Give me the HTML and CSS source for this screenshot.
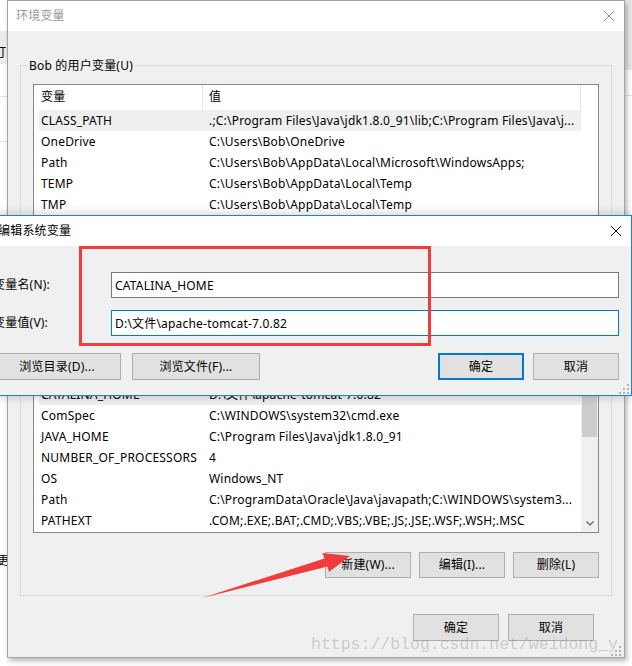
FILE: index.html
```html
<!DOCTYPE html>
<html lang="zh-CN">
<head>
<meta charset="utf-8">
<title>环境变量</title>
<link rel="stylesheet" href="styles.css">
</head>
<body>
<div class="desk">
  <div class="bgwin">
    <div class="strip strip-l">
      <div class="sl-top"></div>
      <div class="sl-band"><span class="sl-text">打</span></div>
      <div class="sl-line l1"></div>
      <div class="sl-line l2"></div>
      <div class="sl-text2">更新</div>
    </div>
    <div class="strip strip-r">
      <div class="sr-band"></div>
      <div class="sr-line"></div>
    </div>
  </div>

  <div class="win">
    <div class="win-title">
      <span class="win-title-text">环境变量</span>
      <svg class="x-icon" width="12" height="12" viewBox="0 0 12 12"><path d="M1 1 L11 11 M11 1 L1 11" stroke="#8e8e8e" stroke-width="1" fill="none"/></svg>
    </div>
    <div class="win-body">
      <fieldset class="group">
        <legend>Bob 的用户变量(U)</legend>
        <div class="list user-list">
          <div class="list-main">
            <div class="lv-head"><div class="hc1">变量</div><div class="hc2">值</div></div>
            <div class="lv-row sel"><div class="c1">CLASS_PATH</div><div class="c2">.;C:\Program Files\Java\jdk1.8.0_91\lib;C:\Program Files\Java\j...</div></div>
            <div class="lv-row"><div class="c1">OneDrive</div><div class="c2">C:\Users\Bob\OneDrive</div></div>
            <div class="lv-row"><div class="c1">Path</div><div class="c2">C:\Users\Bob\AppData\Local\Microsoft\WindowsApps;</div></div>
            <div class="lv-row"><div class="c1">TEMP</div><div class="c2">C:\Users\Bob\AppData\Local\Temp</div></div>
            <div class="lv-row"><div class="c1">TMP</div><div class="c2">C:\Users\Bob\AppData\Local\Temp</div></div>
          </div>
        </div>
        <div class="btns">
          <button class="btn">新建(N)...</button>
          <button class="btn">编辑(E)...</button>
          <button class="btn">删除(D)</button>
        </div>
      </fieldset>
      <fieldset class="group sys">
        <legend>系统变量(S)</legend>
        <div class="list sys-list">
          <div class="list-main">
            <div class="lv-head"><div class="hc1">变量</div><div class="hc2">值</div></div>
            <div class="lv-row"><div class="c1">ASL.log</div><div class="c2">Destination=file</div></div>
            <div class="lv-row sel"><div class="c1">CATALINA_HOME</div><div class="c2">D:\文件\apache-tomcat-7.0.82</div></div>
            <div class="lv-row"><div class="c1">ComSpec</div><div class="c2">C:\WINDOWS\system32\cmd.exe</div></div>
            <div class="lv-row"><div class="c1">JAVA_HOME</div><div class="c2">C:\Program Files\Java\jdk1.8.0_91</div></div>
            <div class="lv-row"><div class="c1">NUMBER_OF_PROCESSORS</div><div class="c2">4</div></div>
            <div class="lv-row"><div class="c1">OS</div><div class="c2">Windows_NT</div></div>
            <div class="lv-row"><div class="c1">Path</div><div class="c2">C:\ProgramData\Oracle\Java\javapath;C:\WINDOWS\system3...</div></div>
            <div class="lv-row"><div class="c1">PATHEXT</div><div class="c2">.COM;.EXE;.BAT;.CMD;.VBS;.VBE;.JS;.JSE;.WSF;.WSH;.MSC</div></div>
          </div>
          <div class="vscroll">
            <div class="sb-arrow"></div>
            <div class="sb-track"><div class="sb-thumb"></div></div>
            <div class="sb-arrow"><svg width="8" height="5" viewBox="0 0 8 5"><path d="M0.5 0.5 L4 4 L7.5 0.5" stroke="#606060" stroke-width="1.2" fill="none"/></svg></div>
          </div>
        </div>
        <div class="btns">
          <button class="btn">新建(W)...</button>
          <button class="btn">编辑(I)...</button>
          <button class="btn">删除(L)</button>
        </div>
      </fieldset>
      <div class="foot">
        <button class="btn tall">确定</button>
        <button class="btn tall">取消</button>
      </div>
    </div>
    <svg class="grip win-grip" width="10" height="10" viewBox="0 0 10 10"><g fill="#b4b4b4"><rect x="8" y="0" width="2" height="2"/><rect x="4" y="4" width="2" height="2"/><rect x="8" y="4" width="2" height="2"/><rect x="0" y="8" width="2" height="2"/><rect x="4" y="8" width="2" height="2"/><rect x="8" y="8" width="2" height="2"/></g></svg>
  </div>

  <div class="dlg">
    <div class="dlg-title">
      <span>编辑系统变量</span>
      <svg class="x-icon" width="12" height="12" viewBox="0 0 12 12"><path d="M1 1 L11 11 M11 1 L1 11" stroke="#111" stroke-width="1" fill="none"/></svg>
    </div>
    <div class="dlg-body">
      <div class="form">
        <label class="lbl">变量名(N):</label>
        <input class="field" value="CATALINA_HOME" readonly>
        <label class="lbl">变量值(V):</label>
        <input class="field focus" value="D:\文件\apache-tomcat-7.0.82" readonly>
      </div>
      <div class="dlg-btns">
        <div class="grp">
          <button class="btn wide">浏览目录(D)...</button>
          <button class="btn wide">浏览文件(F)...</button>
        </div>
        <div class="grp right">
          <button class="btn tall default">确定</button>
          <button class="btn tall">取消</button>
        </div>
      </div>
    </div>
    <svg class="grip dlg-grip" width="10" height="10" viewBox="0 0 10 10"><g fill="#b4b4b4"><rect x="8" y="0" width="2" height="2"/><rect x="4" y="4" width="2" height="2"/><rect x="8" y="4" width="2" height="2"/><rect x="0" y="8" width="2" height="2"/><rect x="4" y="8" width="2" height="2"/><rect x="8" y="8" width="2" height="2"/></g></svg>
  </div>

  <div class="redbox"></div>

  <svg class="arrow" width="632" height="666" viewBox="0 0 632 666">
    <polygon points="202,598 324.5,558.5 322.5,553 350,556 329,572 327.5,566.5" fill="#f03c3c"/>
  </svg>

  <div class="wm">https://blog.csdn.net/weidong_y</div>
</div>
</body>
</html>
```

FILE: styles.css
```css
* { box-sizing: border-box; }
html, body { margin: 0; padding: 0; }
body {
  width: 632px;
  height: 666px;
  overflow: hidden;
  background: #fff;
  font-family: "Noto Sans", "Noto Sans CJK SC", sans-serif;
  font-size: 12px;
  letter-spacing: 0.2px;
  color: #000;
}
.desk { position: relative; width: 632px; height: 666px; overflow: hidden; }

/* background window behind */
.bgwin { position: absolute; left: 0; top: 0; width: 632px; height: 666px; background: #fff; display: flex; justify-content: space-between; }
.strip { width: 8px; overflow: hidden; }
.sl-top { height: 31px; }
.sl-band { height: 33px; background: #ececec; padding-top: 15px; line-height: 14px; white-space: nowrap; }
.sl-text { display: inline-block; margin-left: -6px; }
.sl-line { height: 1px; background: #e4e4e4; }
.sl-line.l1 { margin-top: 32px; }
.sl-line.l2 { margin-top: 44px; }
.sl-text2 { margin-top: 412px; margin-left: -3px; line-height: 14px; white-space: nowrap; }
.sr-band { height: 70px; background: #e8e8e8; }
.sr-line { height: 1px; background: #e4e4e4; margin-top: 25px; }

/* main window */
.win {
  position: absolute;
  left: 7px; top: 0;
  width: 618px; height: 658px;
  border: 1px solid #a3a3a3;
  background: #f0f0f0;
  display: flex;
  flex-direction: column;
  box-shadow: 2px 3px 5px rgba(0,0,0,0.28);
}
.win-title {
  height: 30px; flex: none;
  background: #fff;
  display: flex; align-items: center; justify-content: space-between;
  padding: 0 9px 0 8px;
  color: #9a9a9a;
  line-height: 16px;
}
.x-icon { display: block; }
.win-body { padding: 27px 12px 0; }
.group {
  margin: 0;
  padding: 11px 12px 17px;
  border: 1px solid #dcdcdc;
  min-width: 0;
}
.group legend { padding: 0 2px; margin-left: -6px; line-height: 15px; font-size: 12px; }
.group.sys { margin-top: 9px; }

.list { display: flex; border: 1px solid #828790; background: #fff; overflow: hidden; }
.user-list { height: 155px; }
.sys-list { height: 196px; }
.list-main { flex: 1; min-width: 0; }
.lv-head { display: flex; height: 25px; line-height: 24px; }
.hc1 { width: 168px; flex: none; padding-left: 7px; }
.hc2 { width: 379px; flex: none; padding-left: 6px; border-left: 1px solid #e5e5e5; border-right: 1px solid #e5e5e5; }
.lv-row { display: flex; width: 542px; margin-left: 5px; height: 21px; line-height: 21px; white-space: nowrap; }
.lv-row.sel { background: #efefef; }
.c1 { width: 170px; flex: none; padding-left: 2px; }
.c2 { flex: 1; min-width: 0; overflow: hidden; }

.vscroll { width: 17px; flex: none; background: #f0f0f0; display: flex; flex-direction: column; }
.sb-arrow { height: 17px; flex: none; display: flex; align-items: center; justify-content: center; }
.sb-track { flex: 1; }
.sb-thumb { margin: 15px 1px 0; height: 67px; background: #cdcdcd; }

.btns { display: flex; justify-content: flex-end; gap: 8px; margin-top: 19px; }
.btn {
  width: 86px; height: 26px;
  padding: 0; margin: 0;
  background: #e1e1e1;
  border: 1px solid #adadad;
  font-family: inherit; font-size: 12px; color: #000;
  letter-spacing: 0.2px;
  line-height: 16px;
}
.btn.tall { height: 27px; }
.foot { display: flex; justify-content: flex-end; gap: 9px; margin-top: 18px; margin-right: 18px; }

.grip { position: absolute; display: block; }
.win-grip { right: 3px; bottom: 1px; }
.dlg-grip { right: 2px; bottom: 1px; }

/* dialog */
.dlg {
  position: absolute;
  left: -20px; top: 215px;
  width: 652px; height: 181px;
  border: 1px solid #1883d7;
  background: #f0f0f0;
  display: flex; flex-direction: column;
  box-shadow: 0 0 10px rgba(0,0,0,0.22);
}
.dlg-title {
  height: 30px; flex: none;
  background: #fff;
  display: flex; align-items: center; justify-content: space-between;
  padding: 0 9px 0 17px;
  line-height: 16px;
}
.dlg-body { padding: 26px 12px 15px; }
.form { display: grid; grid-template-columns: 118px 1fr; grid-auto-rows: 26px; row-gap: 12px; align-items: center; }
.lbl { line-height: 16px; }
.field {
  display: block;
  width: 100%; height: 26px;
  margin: 0;
  border: 1px solid #7a7a7a;
  background: #fff;
  padding: 0 3px;
  font-family: "Noto Sans", "Noto Sans CJK SC", sans-serif;
  font-size: 12px; color: #000;
  letter-spacing: 0.2px;
  outline: none;
}
.field.focus { border-color: #0078d7; }
.dlg-btns { display: flex; justify-content: space-between; margin-top: 17px; }
.grp { display: flex; gap: 11px; }
.grp.right { gap: 9px; }
.btn.wide { width: 128px; height: 27px; }
.btn.default { border: 2px solid #0078d7; }

/* overlays */
.redbox {
  position: absolute;
  left: 79px; top: 246px;
  width: 352px; height: 100px;
  border: 3px solid #f03c3c;
}
.arrow { position: absolute; left: 0; top: 0; display: block; pointer-events: none; }
.wm {
  position: absolute;
  left: 311px; top: 634px;
  font-family: "Liberation Mono", monospace;
  font-size: 16.5px;
  line-height: 22px;
  color: rgba(150,150,150,0.42);
  white-space: nowrap;
  letter-spacing: 0;
}
```
